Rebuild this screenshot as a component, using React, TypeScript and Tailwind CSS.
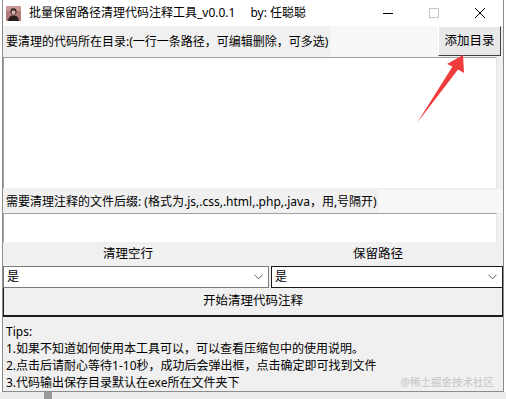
import React from 'react';

const font = { fontFamily: '"Noto Sans", "Noto Sans CJK SC", sans-serif' };

function Chevron() {
    return (
        <svg width="9" height="6" viewBox="0 0 9 6" className="shrink-0">
            <path d="M0.5 0.8 L4.5 4.8 L8.5 0.8" fill="none" stroke="#555" strokeWidth="1" />
        </svg>
    );
}

function AppIcon() {
    return (
        <svg width="15" height="15" viewBox="0 0 15 15" className="shrink-0">
            <rect width="15" height="15" fill="#b07a78" />
            <rect x="0" y="0" width="15" height="5" fill="#c99894" />
            <ellipse cx="7.5" cy="5.5" rx="3" ry="3.3" fill="#2e2222" />
            <ellipse cx="7.5" cy="6.4" rx="2" ry="2.2" fill="#d7b3a6" />
            <path d="M2 15 C2.5 10.5 5 9.5 7.5 9.5 C10 9.5 12.5 10.5 13 15 Z" fill="#2a2020" />
        </svg>
    );
}

function Select({ dark }: { dark?: boolean }) {
    return (
        <div
            className={`flex h-full items-center justify-between bg-white pl-[3px] pr-[5px] text-[12px] text-black border ${
                dark ? 'border-[#1a1a1a]' : 'border-[#7a7a7a]'
            }`}
        >
            <span>是</span>
            <Chevron />
        </div>
    );
}

export default function App() {
    return (
        <div className="relative h-[399px] w-[506px] overflow-hidden bg-white" style={font}>
            <div className="ml-[2px] flex h-[392px] w-[502px] flex-col border-x border-b border-[#8c8c8c] bg-[#f0f0f0]">
                {/* title bar */}
                <div className="flex h-[26px] shrink-0 items-center bg-white">
                    <div className="ml-[3px]">
                        <AppIcon />
                    </div>
                    <span className="ml-[8px] text-[12px] leading-none text-black">
                        批量保留路径清理代码注释工具_v0.0.1
                    </span>
                    <span className="ml-[15px] text-[12px] leading-none text-black">by: 任聪聪</span>
                    <div className="ml-auto flex h-full items-center">
                        <div className="flex h-full w-[46px] items-center justify-center">
                            <div className="h-px w-[10px] bg-black" />
                        </div>
                        <div className="flex h-full w-[46px] items-center justify-center">
                            <div className="h-[10px] w-[10px] border border-[#c4c4c4]" />
                        </div>
                        <div className="flex h-full w-[46px] items-center justify-center">
                            <svg width="10" height="10" viewBox="0 0 10 10">
                                <path d="M0 0 L10 10 M10 0 L0 10" stroke="#000" strokeWidth="1" />
                            </svg>
                        </div>
                    </div>
                </div>

                {/* row 1 */}
                <div className="flex h-[31px] shrink-0 items-stretch">
                    <div className="flex items-center bg-[#f0f0f0] pl-[3px] pr-[2px] text-[12px] text-black">
                        要清理的代码所在目录:(一行一条路径，可编辑删除，可多选)
                    </div>
                    <div className="flex-1 bg-[#f7f7f7]" />
                    <button className="mr-[2px] flex h-[30px] w-[63px] items-center justify-center border border-t-white border-l-white border-r-[#404040] border-b-[#404040] bg-[#e8e8e8] text-[12.5px] text-black">
                        添加目录
                    </button>
                </div>

                {/* textarea 1 */}
                <div className="flex h-[131px] shrink-0">
                    <div className="w-[494px] border-t border-l border-r border-t-[#a0a0a0] border-l-[#a0a0a0] border-r-[#e3e3e3] bg-white" />
                </div>

                <div className="h-[2px] shrink-0" />

                {/* label 2 */}
                <div className="flex h-[23px] shrink-0">
                    <div className="flex items-center bg-[#f0f0f0] pl-[3px] pr-[2px] text-[12px] text-black">
                        需要清理注释的文件后缀: (格式为.js,.css,.html,.php,.java，用,号隔开)
                    </div>
                    <div className="flex-1 bg-[#f7f7f7]" />
                </div>

                {/* input 2 */}
                <div className="flex h-[29px] shrink-0">
                    <div className="w-[494px] border-t border-l border-r border-t-[#a0a0a0] border-l-[#a0a0a0] border-r-[#e3e3e3] bg-white" />
                </div>

                {/* column labels */}
                <div className="grid h-[24px] shrink-0 grid-cols-2 items-center text-[12.5px] text-black">
                    <div className="text-center">清理空行</div>
                    <div className="text-center">保留路径</div>
                </div>

                {/* selects */}
                <div className="flex h-[22px] shrink-0 gap-[2px]">
                    <div className="w-[266px]">
                        <Select />
                    </div>
                    <div className="flex-1">
                        <Select dark />
                    </div>
                </div>

                {/* start button */}
                <div className="flex h-[29px] shrink-0 items-center justify-center border-x border-b-2 border-[#1a1a1a] bg-[#f0f0f0] text-[12.5px] text-black">
                    开始清理代码注释
                </div>

                {/* tips */}
                <div className="relative flex-1 px-[3px] pt-[6px] text-[12px] leading-[17px] text-black">
                    <div>Tips:</div>
                    <div>1.如果不知道如何使用本工具可以，可以查看压缩包中的使用说明。</div>
                    <div>2.点击后请耐心等待1-10秒，成功后会弹出框，点击确定即可找到文件</div>
                    <div className="flex items-center justify-between pr-[6px]">
                        <span>3.代码输出保存目录默认在exe所在文件夹下</span>
                        <span className="text-[10.5px] text-[#c4c4c4]">@稀土掘金技术社区</span>
                    </div>
                </div>
            </div>

            {/* bottom strip behind window */}
            <div className="flex h-[7px] bg-[#ececec]">
                <div className="ml-[44px] h-full w-[8px] bg-[#9a9a9a]" />
            </div>

            {/* red annotation arrow */}
            <svg className="pointer-events-none absolute left-0 top-0" width="506" height="399" viewBox="0 0 506 399">
                <polygon points="463,55 464,73 458,69.5 417,123 452.5,66.5 447,64" fill="#ef3b3b" />
            </svg>
        </div>
    );
}
